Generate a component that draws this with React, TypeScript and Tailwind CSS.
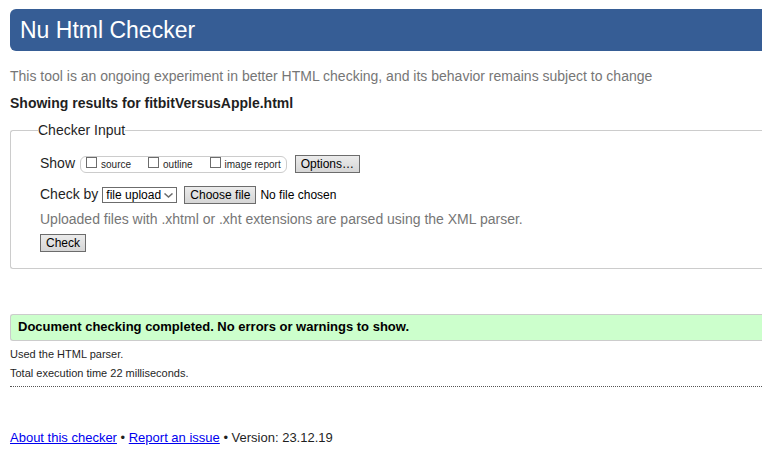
import { useRef, useState } from "react";

const buttonClass =
  "h-[18px] shrink-0 border border-[#6c6c6c] bg-linear-to-b from-[#ebebeb] to-[#d6d6d6] px-[5px] text-xs leading-4 text-black";

const views = ["source", "outline", "image report"];

function ShowOptions() {
  return (
    <div className="flex h-[18px] items-center">
      <span className="self-start text-sm leading-4">Show</span>
      <div className="ml-[5px] flex h-[17px] items-center gap-[17px] rounded-md border border-[#cccccc] px-[5px]">
        {views.map((view) => (
          <label key={view} className="flex items-center gap-1 pt-[2px] text-[10px] leading-4">
            <input
              type="checkbox"
              className="mb-[6px] size-[11px] appearance-none border border-[#6c6c6c] bg-white checked:bg-[#365d95]"
            />
            {view}
          </label>
        ))}
      </div>
      <button type="button" className={`ml-2 ${buttonClass}`}>
        Options…
      </button>
    </div>
  );
}

function CheckBy() {
  const picker = useRef<HTMLInputElement>(null);
  const [fileName, setFileName] = useState("No file chosen");
  return (
    <div className="flex h-[18px] items-center">
      <label htmlFor="method" className="self-start text-sm leading-4">
        Check by
      </label>
      <div className="relative ml-1">
        <select
          id="method"
          className="block h-4 w-[75px] appearance-none border border-[#6c6c6c] bg-white pl-[3px] text-xs leading-[14px] text-black"
        >
          <option>file upload</option>
          <option>address</option>
          <option>text input</option>
        </select>
        <svg
          className="pointer-events-none absolute top-[6px] right-1"
          width="9"
          height="5"
          viewBox="0 0 9 5"
          fill="none"
          stroke="#6c6c6c"
          strokeWidth="1.5"
        >
          <path d="M0.5 0.5 L4.5 4 L8.5 0.5" />
        </svg>
      </div>
      <input
        ref={picker}
        type="file"
        aria-label="File to check"
        className="hidden"
        onChange={(e) => setFileName(e.target.files?.[0]?.name ?? "No file chosen")}
      />
      <button
        type="button"
        className={`ml-[7px] ${buttonClass}`}
        onClick={() => picker.current?.click()}
      >
        Choose file
      </button>
      <span className="ml-1 text-xs text-black">{fileName}</span>
    </div>
  );
}

export default function App() {
  return (
    <div className="bg-white pt-[9px] pl-[10px] font-['Liberation_Sans',Arial,sans-serif] text-[#1f1f1f]">
      <h1 className="rounded-l-md bg-[#365d95] px-[10px] py-[5px] text-[23px] leading-8 text-white">
        Nu Html Checker
      </h1>
      <p className="mt-[15px] text-sm text-[#767676]">
        This tool is an ongoing experiment in better HTML checking, and its behavior remains
        subject to change
      </p>
      <h2 className="mt-[7px] text-sm font-bold">Showing results for fitbitVersusApple.html</h2>

      <form onSubmit={(e) => e.preventDefault()}>
        <fieldset className="mt-2 rounded-l-[3px] border border-r-0 border-[#cccccc] pb-4 pl-[29px]">
          <legend className="-ml-[2px] text-sm leading-[18px]">Checker Input</legend>
          <div className="flex flex-col items-start pt-4">
            <ShowOptions />
            <div className="mt-[13px]">
              <CheckBy />
            </div>
            <p className="mt-[5px] text-sm text-[#767676]">
              Uploaded files with .xhtml or .xht extensions are parsed using the XML parser.
            </p>
            <button type="submit" className={`mt-[5px] ${buttonClass}`}>
              Check
            </button>
          </div>
        </fieldset>
      </form>

      <p className="mt-[45px] rounded-l-[3px] border border-r-0 border-[#cccccc] bg-[#ccffcc] px-[7px] pt-[2px] pb-1 text-[13px] leading-[19px] font-bold text-black">
        Document checking completed. No errors or warnings to show.
      </p>
      <p className="mt-[5px] text-[11px] leading-4">Used the HTML parser.</p>
      <p className="mt-[3px] text-[11px] leading-4">Total execution time 22 milliseconds.</p>

      <footer className="mt-[5px] border-t border-dotted border-[#555555] pt-[41px] text-[13px] leading-5">
        <a href="#about" className="text-[#0000ee] underline">
          About this checker
        </a>
        {" • "}
        <a href="#issues" className="text-[#0000ee] underline">
          Report an issue
        </a>
        {" • Version: 23.12.19"}
      </footer>
    </div>
  );
}
